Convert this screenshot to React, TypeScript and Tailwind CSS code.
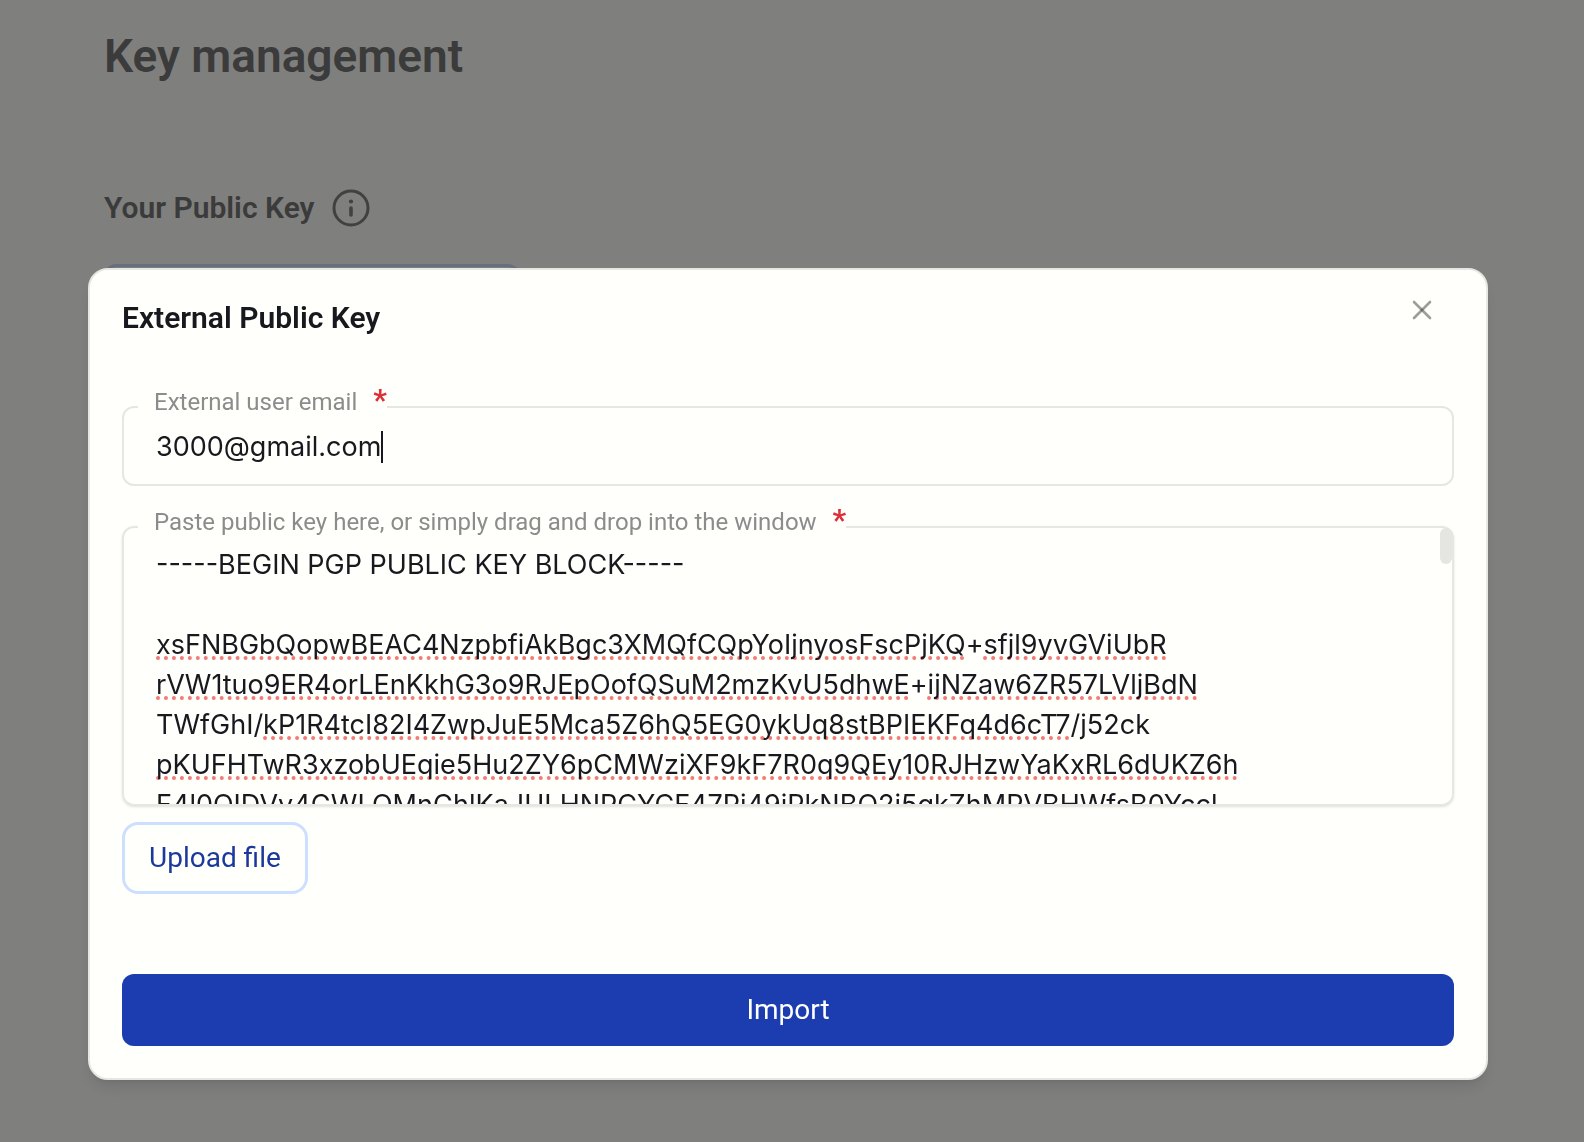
import { useState, type ReactNode } from "react";

const KEY_LINES: { text: string; misspelt?: boolean }[][] = [
  [{ text: "-----BEGIN PGP PUBLIC KEY BLOCK-----" }],
  [],
  [
    { text: "xsFNBGbQopwBEAC4NzpbfiAkBgc3XMQfCQpYoIjnyosFscPjKQ", misspelt: true },
    { text: "+" },
    { text: "sfjl9yvGViUbR", misspelt: true },
  ],
  [
    { text: "rVW1tuo9ER4orLEnKkhG3o9RJEpOofQSuM2mzKvU5dhwE", misspelt: true },
    { text: "+" },
    { text: "ijNZaw6ZR57LVljBdN", misspelt: true },
  ],
  [
    { text: "TWfGhI/" },
    { text: "kP1R4tcI82I4ZwpJuE5Mca5Z6hQ5EG0ykUq8stBPIEKFq4d6cT7", misspelt: true },
    { text: "/j52ck" },
  ],
  [{ text: "pKUFHTwR3xzobUEqie5Hu2ZY6pCMWziXF9kF7R0q9QEy10RJHzwYaKxRL6dUKZ6h", misspelt: true }],
  [{ text: "F4l0OIDVv4GWLQMnGhlKaJULHNPCYCF47Pi49iPkNBO2i5gkZhMPVBHWfsB0Yccl" }],
];

const KEY_TEXT = KEY_LINES.map((line) => line.map((part) => part.text).join("")).join("\n");

function InfoIcon() {
  return (
    <svg viewBox="0 0 40 40" className="size-10" fill="none" stroke="currentColor" aria-hidden="true">
      <circle cx="20" cy="20" r="17" strokeWidth="3" />
      <path d="M20 20v7" strokeWidth="3.6" strokeLinecap="round" />
      <circle cx="20" cy="13.5" r="2.1" fill="currentColor" stroke="none" />
    </svg>
  );
}

function CloseIcon() {
  return (
    <svg viewBox="0 0 24 24" className="size-6" fill="none" strokeWidth="2.6" strokeLinecap="round" aria-hidden="true">
      <path d="M4 4l16 16" stroke="#3b3b3b" strokeOpacity="0.5" />
      <path d="M20 4L4 20" stroke="#3b3b3b" strokeOpacity="0.5" />
    </svg>
  );
}

function FieldLabel({ htmlFor, children }: { htmlFor: string; children: ReactNode }) {
  return (
    <label
      htmlFor={htmlFor}
      className="absolute -top-[22px] left-3.5 z-10 flex h-8 items-start gap-4 bg-[#fffffc] pl-4 text-2xl leading-8 text-[#8c8c8c]"
    >
      {children}
      <span className="text-3xl leading-7 font-bold text-[#dc2f38]">*</span>
    </label>
  );
}

export default function App() {
  const [email, setEmail] = useState("3000@gmail.com");
  const [key, setKey] = useState(KEY_TEXT);

  return (
    <div className="min-h-screen bg-[#fffffc] font-['Roboto',sans-serif]">
      <main className="px-[104px] pt-7">
        <h1 className="text-[46px] leading-14 font-semibold text-[#767676]">Key management</h1>
        <div className="mt-24 flex items-center gap-4 text-[#767676]">
          <h2 className="text-3xl leading-14 font-semibold">Your Public Key</h2>
          <button type="button" aria-label="About your public key" className="text-[#838383]">
            <InfoIcon />
          </button>
        </div>
        <div className="mt-7 h-18 w-[416px] rounded-xl border-3 border-[#cddffe]" />
      </main>

      <div className="fixed inset-0 overflow-hidden bg-black/50 pt-[268px] pr-24 pl-[88px]">
        <section
          role="dialog"
          aria-modal="true"
          aria-labelledby="dialog-title"
          className="rounded-[20px] border-2 border-[#e6e6e3] bg-[#fffffc] p-8 shadow-lg"
        >
          <header className="flex h-8 items-center justify-between pr-5">
            <h2 id="dialog-title" className="text-3xl leading-8 font-semibold text-[#18181f]">
              External Public Key
            </h2>
            <button type="button" aria-label="Close" className="-mt-4">
              <CloseIcon />
            </button>
          </header>

          <form className="mt-[72px]" onSubmit={(event) => event.preventDefault()}>
            <div className="relative flex h-20 items-center rounded-xl border-2 border-[#e6e7e2] px-8 pt-0.5">
              <FieldLabel htmlFor="email">External user email</FieldLabel>
              <input
                id="email"
                type="email"
                required
                value={email}
                onChange={(event) => setEmail(event.target.value)}
                className="[field-sizing:content] font-['Inter',sans-serif] text-[27px] leading-10 text-[#18181f] caret-transparent outline-none"
              />
              <span className="h-8 w-0.5 bg-[#18181f]" />
            </div>

            <div className="relative mt-10 h-[280px] rounded-xl border-2 border-[#e6e7e2] shadow-sm">
              <FieldLabel htmlFor="public-key">
                Paste public key here, or simply drag and drop into the window
              </FieldLabel>
              <div
                aria-hidden="true"
                className="pointer-events-none absolute inset-0 overflow-hidden px-8 pt-[17px] font-['Inter',sans-serif] text-[27px] leading-10 whitespace-pre text-transparent select-none"
              >
                {KEY_LINES.map((line, index) => (
                  <div key={index} className="h-10">
                    {line.map((part) => (
                      <span
                        key={part.text}
                        className={
                          part.misspelt
                            ? "underline decoration-[#f27c74] decoration-dotted decoration-4 underline-offset-2 [text-decoration-skip-ink:none]"
                            : ""
                        }
                      >
                        {part.text}
                      </span>
                    ))}
                  </div>
                ))}
              </div>
              <textarea
                id="public-key"
                required
                spellCheck={false}
                value={key}
                onChange={(event) => setKey(event.target.value)}
                className="relative block h-full w-full resize-none px-8 pt-[17px] font-['Inter',sans-serif] text-[27px] leading-10 text-[#18181f] outline-none [scrollbar-width:none]"
              />
              <span className="absolute top-0 right-0 h-9 w-3 rounded-full bg-[#e5e6e1]" />
            </div>

            <button
              type="button"
              className="mt-4 h-18 rounded-2xl border-3 border-[#cddffe] px-6 text-[28px] leading-8 font-[450] text-[#1b389c]"
            >
              Upload file
            </button>

            <button
              type="submit"
              className="mt-20 block h-18 w-full rounded-xl bg-[#1b3db0] text-[28px] leading-8 font-[450] text-[#fffffc]"
            >
              Import
            </button>
          </form>
        </section>
      </div>
    </div>
  );
}
